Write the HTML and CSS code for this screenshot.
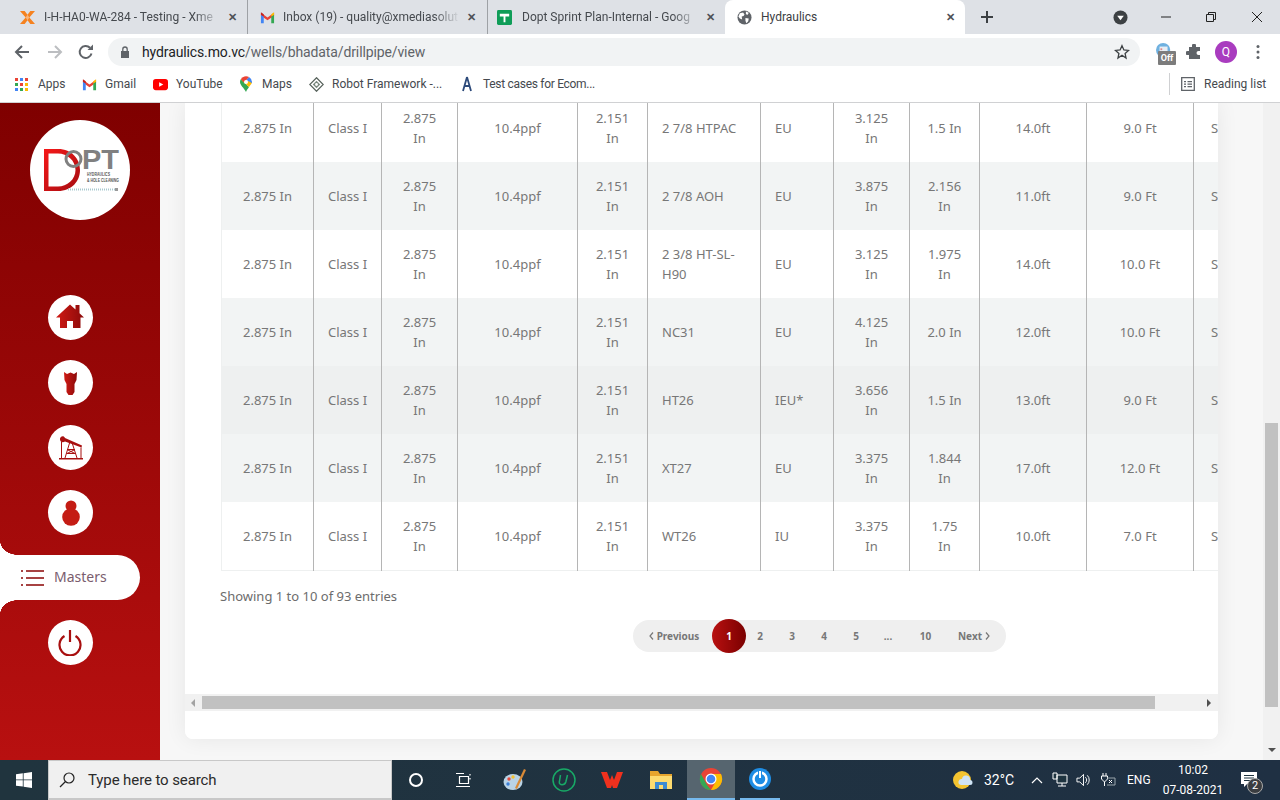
FILE: index.html
```html
<!DOCTYPE html>
<html lang="en">
<head>
<meta charset="utf-8">
<title>Hydraulics</title>
<link rel="stylesheet" href="styles.css">
</head>
<body>
<div class="tabstrip">
  <div class="tab t1">
    <svg class="fav" viewBox="0 0 16 16"><path fill="#f58220" d="M0 1l6 7-6 7h5l3-4 3 4h5l-6-7 6-7h-5L8 5 5 1z"/><path fill="#f9b47a" d="M6 8l2-3 2 3-2 3z"/></svg>
    <span class="tab-title">I-H-HA0-WA-284 - Testing - Xme</span><span class="tab-x">✕</span>
  </div>
  <div class="tab t2">
    <svg class="fav" viewBox="0 0 16 16"><path fill="#ea4335" d="M1 3l7 5 7-5v3L8 11 1 6z"/><path fill="#4285f4" d="M1 5v9h3V7z"/><path fill="#34a853" d="M15 5v9h-3V7z"/><path fill="#fbbc04" d="M12 4.5l3-2V5l-3 2z"/><path fill="#c5221f" d="M1 2.500l3 2V7L1 5z"/></svg>
    <span class="tab-title">Inbox (19) - quality@xmediasolut</span><span class="tab-x">✕</span>
  </div>
  <div class="tab t3">
    <svg class="fav" viewBox="0 0 16 16"><rect width="16" height="16" rx="1.500" fill="#0f9d58"/><path fill="#fff" d="M3 4h10v3H9v6H7V7H3z"/></svg>
    <span class="tab-title">Dopt Sprint Plan-Internal - Goog</span><span class="tab-x">✕</span>
  </div>
  <div class="tab tab-active">
    <svg class="fav" viewBox="0 0 16 16"><circle cx="8" cy="8" r="7.500" fill="#5f6368"/><path fill="#fff" d="M3 3.500l3.500-.8 1.500 2-1 1.800-2 .5.500 3L3 9 1.500 7zM9 8.500l3.500.5-.5 3-2 2-1-2.500zM9.500 1.500l3 1.500-1 2-2-.5z"/></svg>
    <span class="tab-title">Hydraulics</span><span class="tab-x">✕</span>
  </div>
  <span class="newtab">
    <svg class="ic14" viewBox="0 0 14 14"><path d="M7 1v12M1 7h12" stroke="#3c4043" stroke-width="2"/></svg>
  </span>
  <div class="win-controls">
    <svg class="profile-drop" viewBox="0 0 16 16"><circle cx="8" cy="8" r="7.500" fill="#3c4043"/><path fill="#fff" d="M4.500 6h7L8 11z"/></svg>
    <svg class="wc wc-min" viewBox="0 0 12 12"><path d="M1 6h10" stroke="#222" stroke-width="1"/></svg>
    <svg class="wc wc-max" viewBox="0 0 12 12"><path d="M1.500 3.500h7v7h-7zM3.500 3.500v-2h7v7h-2" fill="none" stroke="#222"/></svg>
    <svg class="wc wc-close" viewBox="0 0 12 12"><path d="M1 1l10 10M11 1L1 11" stroke="#222"/></svg>
  </div>
</div>

<div class="toolbar">
  <svg class="nav-ic nav-back" viewBox="0 0 16 16"><path d="M15 8H2M8 2L2 8l6 6" fill="none" stroke="#5f6368" stroke-width="2"/></svg>
  <svg class="nav-ic nav-fwd" viewBox="0 0 16 16"><path d="M1 8h13M8 2l6 6-6 6" fill="none" stroke="#bcbec1" stroke-width="2"/></svg>
  <svg class="nav-ic nav-reload" viewBox="0 0 16 16"><path d="M13.500 9.500A6 6 0 1 1 12 3.800" fill="none" stroke="#5f6368" stroke-width="2"/><path fill="#5f6368" d="M9.500 6H15V.5z"/></svg>
  <div class="omnibox">
    <svg class="lock" viewBox="0 0 10 12"><path fill="#5f6368" d="M1 5h8v7H1z"/><path d="M2.800 5V3.200a2.200 2.200 0 0 1 4.400 0V5" fill="none" stroke="#5f6368" stroke-width="1.300"/></svg>
    <span class="url"><b>hydraulics.mo.vc</b>/wells/bhadata/drillpipe/view</span>
    <svg class="star" viewBox="0 0 16 16"><path d="M8 1.700l1.900 4.200 4.600.5-3.400 3.100.9 4.500L8 11.200l-4 2.800.9-4.500L1.500 6.400l4.600-.5z" fill="none" stroke="#3c4043" stroke-width="1.300"/></svg>
  </div>
  <div class="ext">
    <svg class="ext-ic" viewBox="0 0 18 18"><circle cx="8" cy="8" r="8" fill="#6fb1e0"/><rect x="4" y="4" width="9" height="8" fill="#e8eef4"/><path d="M5 6h2v2H5z" fill="#d88"/></svg>
    <span class="off-badge">Off</span>
  </div>
  <svg class="puzzle" viewBox="0 0 16 16"><path fill="#5f6368" d="M6 1.500a2 2 0 0 1 4 0V3h4v4h-1.500a2 2 0 0 0 0 4H14v4H3v-4H1.500a2 2 0 0 1 0-4H3V3h3z"/></svg>
  <span class="avatar">Q</span>
  <svg class="kebab" viewBox="0 0 4 16"><circle cx="2" cy="2.500" r="1.500" fill="#5f6368"/><circle cx="2" cy="8" r="1.500" fill="#5f6368"/><circle cx="2" cy="13.500" r="1.500" fill="#5f6368"/></svg>
</div>

<div class="bookmarks">
  <span class="bm bm-apps">
    <svg class="bm-ic" viewBox="0 0 13 13"><g fill="#ea4335"><rect width="3" height="3"/><rect x="5" width="3" height="3" fill="#4285f4"/><rect x="10" width="3" height="3" fill="#ea4335"/><rect y="5" width="3" height="3" fill="#34a853"/><rect x="5" y="5" width="3" height="3" fill="#ea4335"/><rect x="10" y="5" width="3" height="3" fill="#fbbc04"/><rect y="10" width="3" height="3" fill="#4285f4"/><rect x="5" y="10" width="3" height="3" fill="#34a853"/><rect x="10" y="10" width="3" height="3" fill="#fbbc04"/></g></svg>
    Apps
  </span>
  <span class="bm bm-gmail">
    <svg class="bm-ic" viewBox="0 0 16 16"><path fill="#ea4335" d="M1 3l7 5 7-5v3L8 11 1 6z"/><path fill="#4285f4" d="M1 5v9h3V7z"/><path fill="#34a853" d="M15 5v9h-3V7z"/><path fill="#fbbc04" d="M12 4.500l3-2V5l-3 2z"/><path fill="#c5221f" d="M1 2.500l3 2V7L1 5z"/></svg>
    Gmail
  </span>
  <span class="bm bm-yt">
    <svg class="bm-ic" viewBox="0 0 16 16"><rect y="2" width="16" height="12" rx="3" fill="#f00"/><path fill="#fff" d="M6.500 5.500v5L11 8z"/></svg>
    YouTube
  </span>
  <span class="bm bm-maps">
    <svg class="bm-ic" viewBox="0 0 12 16"><path fill="#34a853" d="M6 16C4 12 0 9 0 6c0-1 .3-2 .8-2.800L9 11c-1 1.500-2.200 3-3 5z"/><path fill="#fbbc04" d="M.8 3.200L4 6.500 9 11c1.500-2 3-3.500 3-5l-4-1z"/><path fill="#4285f4" d="M12 6a6 6 0 0 0-3-5L6 4l2 1 4 2z"/><path fill="#ea4335" d="M.8 3.200A6 6 0 0 1 9 1L4 6.500z"/><circle cx="6" cy="6" r="2" fill="#fff"/></svg>
    Maps
  </span>
  <span class="bm bm-robot">
    <svg class="bm-ic" viewBox="0 0 16 16"><path d="M8 .8L15.200 8 8 15.200.8 8z" fill="#fff" stroke="#56615a" stroke-width="1.300"/><path d="M8 4l4 4-4 4-4-4z" fill="#7c8a80"/><circle cx="8" cy="8" r="1.500" fill="#fff"/></svg>
    Robot Framework -...
  </span>
  <span class="bm bm-test">
    <svg class="bm-ic" viewBox="0 0 12 16"><path d="M6 1L2 15M6 1l4 14M3.500 10h5" fill="none" stroke="#2d4a7a" stroke-width="1.800"/></svg>
    Test cases for Ecom...
  </span>
  <span class="bm-sep"></span>
  <span class="bm bm-read">
    <svg class="bm-ic" viewBox="0 0 14 14"><path d="M.7.7h12.600v12.600H.7z" fill="none" stroke="#5f6368" stroke-width="1.300"/><path d="M3 4h2v1.300H3zM6.500 4H11v1.300H6.500zM3 6.500h2v1.300H3zM6.500 6.500H11v1.300H6.500zM3 9h2v1.300H3zM6.500 9H11v1.300H6.500z" fill="#5f6368"/></svg>
    Reading list
  </span>
</div>

<div class="viewport">
  <aside class="sidebar">
    <div class="logo">
      <svg class="logo-svg" viewBox="0 0 100 100">
        <defs><linearGradient id="lg" x1="0" y1="0" x2="1" y2="1"><stop offset="0" stop-color="#f61818"/><stop offset="1" stop-color="#a50d12"/></linearGradient></defs>
        <path d="M14 29h14C42 29 50 39 50 50S42 71 28 71H14zM18.500 33.500v33H28c9 0 17.500-7 17.500-16.500S37 33.500 28 33.500z" fill="url(#lg)"/>
        <circle cx="43.500" cy="39" r="7.500" fill="none" stroke="#808080" stroke-width="3"/>
        <text x="52" y="49" class="logo-opt" textLength="37" lengthAdjust="spacingAndGlyphs">PT</text>
        <text x="57" y="55.500" class="logo-small" textLength="23" lengthAdjust="spacingAndGlyphs">HYDRAULICS</text>
        <text x="57" y="62" class="logo-small" textLength="32" lengthAdjust="spacingAndGlyphs">&amp; HOLE CLEANING</text>
        <path d="M38 69.500h47" stroke="#a9c9cf" stroke-width="2" stroke-dasharray="1 1"/>
        <path d="M85 68h3v3h-3z" fill="#999"/>
      </svg>
    </div>
    <nav class="side-nav">
      <a class="side-ic">
        <svg class="sv26" viewBox="0 0 28 24"><defs><linearGradient id="rg" x1="0" y1="0" x2="1" y2="0"><stop offset="0" stop-color="#d01a14"/><stop offset="1" stop-color="#8b0a0a"/></linearGradient></defs><path fill="url(#rg)" d="M14 .5l5.500 5V1h4v8.200L28 13.500h-3.500V24H17v-7h-6v7H4v-10.500H0z"/></svg>
      </a>
      <a class="side-ic">
        <svg class="sv-bit" viewBox="0 0 13 24"><path fill="url(#rg)" d="M0 1l3 2 3.500-1.500L10 3l3-2-.5 8L10.500 13v8L8.500 24h-4l-2-3v-8L.5 9z"/></svg>
      </a>
      <a class="side-ic">
        <svg class="sv-pump" viewBox="0 0 24 24"><path fill="#a80f0f" d="M0 22.500h24V24H0zM1 3c1-3 4-3 5-.5L23 10l-.5 2L6 6C3.500 8 .5 6 1 3z"/><path d="M2.500 6v16.500M22 12v10.500M11 6l-5 16.500M13 7l5 15.500M8.500 14h7M7.500 18h9M8 14l8 4M16 14l-8 4" stroke="#a80f0f" stroke-width="1" fill="none"/></svg>
      </a>
      <a class="side-ic">
        <svg class="sv-bulb" viewBox="0 0 18 26"><circle cx="9" cy="6" r="5.500" fill="#c41c14"/><circle cx="9" cy="17" r="8.800" fill="#c41c14"/></svg>
      </a>
      <a class="side-pill">
        <svg class="sv-list" viewBox="0 0 23 16"><path d="M5 1h18M5 8h18M5 15h18" stroke="#8b0505" stroke-width="1.600"/><path d="M0 1h2M0 8h2M0 15h2" stroke="#8b0505" stroke-width="1.600"/></svg>
        <span class="pill-label">Masters</span>
      </a>
      <a class="side-ic">
        <svg class="sv-power" viewBox="0 0 24 26"><path d="M12 0v12" stroke="#a80f0f" stroke-width="2.200"/><path d="M6.500 6a10.500 10.500 0 1 0 11 0" fill="none" stroke="#a80f0f" stroke-width="2.200"/></svg>
      </a>
    </nav>
  </aside>

  <main class="content">
    <section class="card">
      <div class="card-scroll">
        <table class="grid">
          <colgroup>
            <col class="c1"><col class="c2"><col class="c3"><col class="c4"><col class="c5"><col class="c6"><col class="c7"><col class="c8"><col class="c9"><col class="c10"><col class="c11"><col class="c12">
          </colgroup>
          <tbody>
            <tr><td>2.875 In</td><td>Class I</td><td>2.875 In</td><td>10.4ppf</td><td>2.151 In</td><td class="l">2 7/8 HTPAC</td><td class="l">EU</td><td>3.125 In</td><td>1.5 In</td><td>14.0ft</td><td>9.0 Ft</td><td class="l">S</td></tr>
            <tr class="alt"><td>2.875 In</td><td>Class I</td><td>2.875 In</td><td>10.4ppf</td><td>2.151 In</td><td class="l">2 7/8 AOH</td><td class="l">EU</td><td>3.875 In</td><td>2.156 In</td><td>11.0ft</td><td>9.0 Ft</td><td class="l">S</td></tr>
            <tr><td>2.875 In</td><td>Class I</td><td>2.875 In</td><td>10.4ppf</td><td>2.151 In</td><td class="l">2 3/8 HT-SL-H90</td><td class="l">EU</td><td>3.125 In</td><td>1.975 In</td><td>14.0ft</td><td>10.0 Ft</td><td class="l">S</td></tr>
            <tr class="alt"><td>2.875 In</td><td>Class I</td><td>2.875 In</td><td>10.4ppf</td><td>2.151 In</td><td class="l">NC31</td><td class="l">EU</td><td>4.125 In</td><td>2.0 In</td><td>12.0ft</td><td>10.0 Ft</td><td class="l">S</td></tr>
            <tr class="hover"><td>2.875 In</td><td>Class I</td><td>2.875 In</td><td>10.4ppf</td><td>2.151 In</td><td class="l">HT26</td><td class="l">IEU*</td><td>3.656 In</td><td>1.5 In</td><td>13.0ft</td><td>9.0 Ft</td><td class="l">S</td></tr>
            <tr class="alt"><td>2.875 In</td><td>Class I</td><td>2.875 In</td><td>10.4ppf</td><td>2.151 In</td><td class="l">XT27</td><td class="l">EU</td><td>3.375 In</td><td>1.844 In</td><td>17.0ft</td><td>12.0 Ft</td><td class="l">S</td></tr>
            <tr><td>2.875 In</td><td>Class I</td><td>2.875 In</td><td>10.4ppf</td><td>2.151 In</td><td class="l">WT26</td><td class="l">IU</td><td>3.375 In</td><td>1.75 In</td><td>10.0ft</td><td>7.0 Ft</td><td class="l">S</td></tr>
          </tbody>
        </table>
        <p class="info">Showing 1 to 10 of 93 entries</p>
        <div class="pager">
          <a class="pg pg-prev"><svg class="chev" viewBox="0 0 5 8"><path d="M4 .5L1 4l3 3.500" fill="none" stroke="#777" stroke-width="1.200"/></svg>Previous</a>
          <a class="pg pg-cur">1</a>
          <a class="pg pg-n">2</a>
          <a class="pg pg-n">3</a>
          <a class="pg pg-n">4</a>
          <a class="pg pg-n">5</a>
          <a class="pg pg-n">...</a>
          <a class="pg pg-ten">10</a>
          <a class="pg pg-next">Next<svg class="chev" viewBox="0 0 5 8"><path d="M1 .5L4 4 1 7.500" fill="none" stroke="#777" stroke-width="1.200"/></svg></a>
        </div>
      </div>
      <div class="hbar">
        <span class="arr arr-l"></span>
        <span class="hthumb"></span>
        <span class="arr arr-r"></span>
      </div>
      <div class="card-foot"></div>
    </section>
  </main>
  <div class="vbar">
    <span class="vthumb"></span>
    <span class="arr-dn"></span>
  </div>
</div>

<footer class="taskbar">
  <span class="tb-start"><svg class="ic16" viewBox="0 0 16 16"><path fill="#fff" d="M0 2.300L6.800 1.300v6.200H0zM7.600 1.200L16 0v7.500H7.600zM0 8.300h6.800v6.300L0 13.700zM7.600 8.300H16V16l-8.400-1.200z"/></svg></span>
  <div class="tb-search">
    <svg class="ic16" viewBox="0 0 16 16"><circle cx="10" cy="6" r="5" fill="none" stroke="#222" stroke-width="1.200"/><path d="M6.500 9.500L1 15" stroke="#222" stroke-width="1.200"/></svg>
    <span class="search-text">Type here to search</span>
  </div>
  <span class="tb-app tb-w48"><svg class="ic16" viewBox="0 0 16 16"><circle cx="8" cy="8" r="6" fill="none" stroke="#fff" stroke-width="2"/></svg></span>
  <span class="tb-app tb-w48"><svg class="ic16" viewBox="0 0 16 16"><path d="M3.500 4.500h9v7h-9zM0 1.500h8M0 14.500h14M14 2v1.500M14 6v1.500" fill="none" stroke="#fff" stroke-width="1.200"/></svg></span>
  <span class="tb-app tb-paint"><svg class="ic24" viewBox="0 0 24 24"><ellipse cx="10" cy="14" rx="9.500" ry="8" fill="#b9d3e6"/><circle cx="6" cy="11" r="1.700" fill="#e64a3c"/><circle cx="10" cy="9" r="1.700" fill="#f6c22f"/><circle cx="5" cy="16" r="1.700" fill="#3c7fd6"/><path d="M21 1l2 1-9 19-2-1z" fill="#d98a36"/></svg></span>
  <span class="tb-app tb-upwork"><svg class="ic24" viewBox="0 0 24 24"><circle cx="12" cy="12" r="11" fill="none" stroke="#18a966" stroke-width="1.500"/><path d="M8.500 7l-1.200 7c-.4 3.500 5.500 3.500 6.500 0L15.500 7" fill="none" stroke="#18a966" stroke-width="1.500"/></svg></span>
  <span class="tb-app tb-wps"><svg class="ic24" viewBox="0 0 24 24"><path fill="#f0311e" d="M1 4h6l3 8 2-5 2 5 3-8h6l-6 16h-4l-1-3-1 3H7z"/></svg></span>
  <span class="tb-app tb-folder"><svg class="ic24" viewBox="0 0 24 24"><path fill="#e7a52e" d="M1 3h8l2 3h12v15H1z"/><path fill="#fddb70" d="M1 8h22v13H1z"/><rect x="6" y="14" width="12" height="7" fill="#3d8bd3"/><rect x="10" y="17" width="4" height="4" fill="#fddb70"/></svg></span>
  <span class="tb-app tb-w48 tb-active"><svg class="ic24" viewBox="0 0 24 24"><circle cx="12" cy="12" r="11" fill="#ea4335"/><path fill="#34a853" d="M2 7l6 11 4 5A11 11 0 0 1 2 7z"/><path fill="#fbbc04" d="M12 7h10a11 11 0 0 1-10 16l5-9z"/><circle cx="12" cy="12" r="5.500" fill="#fff"/><circle cx="12" cy="12" r="4.300" fill="#4285f4"/></svg></span>
  <span class="tb-app tb-running"><svg class="ic24" viewBox="0 0 24 24"><circle cx="12" cy="12" r="11" fill="#1f8de4"/><circle cx="12" cy="12" r="6.500" fill="none" stroke="#fff" stroke-width="2.500"/><path d="M12 3v8" stroke="#1f8de4" stroke-width="4"/><path d="M12 4v7" stroke="#fff" stroke-width="2"/></svg></span>
  <div class="tray">
    <svg class="ic20" viewBox="0 0 20 20"><circle cx="9" cy="10" r="9" fill="#f4c430"/><path d="M8 15a3 3 0 0 1 1-6 4 4 0 0 1 8 1 2.500 2.500 0 0 1 0 5z" fill="#cfe3f5"/></svg>
    <span class="temp">32°C</span>
    <svg class="tr-caret" viewBox="0 0 12 8"><path d="M1 7l5-5 5 5" fill="none" stroke="#fff" stroke-width="1.200"/></svg>
    <svg class="tr-net" viewBox="0 0 16 16"><path d="M5 3h10v8H5zM10 11v3M6 14h8M1 1h4v6H1z" fill="#1f3440" stroke="#fff"/></svg>
    <svg class="tr-vol" viewBox="0 0 16 16"><path d="M1 6h3l4-4v12l-4-4H1z" fill="none" stroke="#fff"/><path d="M10 5a4 4 0 0 1 0 6M12 3a7 7 0 0 1 0 10" fill="none" stroke="#fff"/></svg>
    <svg class="tr-pow" viewBox="0 0 16 16"><path d="M3 1v3M6 1v3M1.500 4h6v3l-3 3-3-3zM4.500 10v4" fill="none" stroke="#fff"/><path d="M7 6h8v7H7" fill="none" stroke="#9aa5ab"/><path d="M9 8l3 3M12 8l-3 3" stroke="#fff"/></svg>
    <span class="eng">ENG</span>
    <span class="clock"><span>10:02</span><span>07-08-2021</span></span>
    <span class="notif">
      <svg class="ic20" viewBox="0 0 20 20"><path fill="#fff" d="M1 2h16v12H7l-3 3v-3H1z"/><path d="M4 5.500h10M4 8h10M4 10.500h7" stroke="#1f3440"/></svg>
      <span class="notif-badge">2</span>
    </span>
  </div>
</footer>
</body>
</html>
```
FILE: styles.css
```css
* { box-sizing: border-box; }
html, body { margin: 0; padding: 0; }
body {
  width: 1280px; height: 800px; overflow: hidden;
  display: flex; flex-direction: column;
  font-family: Roboto, "Noto Sans", sans-serif;
  background: #fff;
}
svg { display: block; flex: none; }

/* Tab strip */
.tabstrip { height: 34px; flex: none; background: #dee1e6; display: flex; align-items: stretch; padding-left: 8px; }
.tab { width: 239px; display: flex; align-items: center; padding: 0 8px 0 12px; font-size: 12px; color: #45494e; }
.t2, .t3 { border-left: 1px solid #9ea1a5; background-clip: padding-box; }
.t2 { width: 240px; padding-right: 9px; }
.t2 .fav { margin-right: 8px; }
.t3 { width: 238px; padding-left: 9px; }
.t3 .fav { margin-right: 10px; }
.tab-active { width: 240px; background: #fff; border-radius: 8px 8px 0 0; color: #3c4043; }
.fav { width: 15px; height: 15px; margin-right: 9px; }
.tab-title {
  flex: 1; min-width: 0; white-space: nowrap; overflow: hidden;
  -webkit-mask-image: linear-gradient(90deg, #000 85%, transparent);
  mask-image: linear-gradient(90deg, #000 85%, transparent);
}
.tab-active .tab-title { -webkit-mask-image: none; mask-image: none; }
.tab-x { width: 14px; font-size: 11px; font-weight: 700; color: #4d5156; text-align: center; margin-left: 4px; }
.newtab { width: 44px; display: flex; align-items: center; justify-content: center; }
.ic14 { width: 14px; height: 14px; }
.win-controls { flex: 1; display: flex; align-items: center; }
.profile-drop { width: 15px; height: 15px; margin-left: 104px; }
.wc { width: 12px; height: 12px; }
.wc-min { margin-left: 32px; }
.wc-max { margin-left: 33px; }
.wc-close { margin-left: 34px; }

/* Toolbar */
.toolbar { height: 35px; flex: none; background: #fff; display: flex; align-items: center; padding: 1px 0 0 14px; }
.nav-ic { width: 16px; height: 16px; }
.nav-fwd { margin-left: 17px; }
.nav-reload { margin-left: 15px; }
.omnibox { width: 1032px; height: 28px; margin-left: 14px; border-radius: 14px; background: #f1f3f4; display: flex; align-items: center; padding-left: 12px; }
.lock { width: 10px; height: 12px; }
.url { margin-left: 12px; font-size: 14px; letter-spacing: -.12px; color: #5f6368; flex: 1; }
.url b { font-weight: 400; color: #202124; }
.star { width: 16px; height: 16px; margin-right: 10px; }
.ext { position: relative; width: 20px; height: 20px; margin-left: 13px; }
.ext-ic { width: 16px; height: 16px; margin: 1px 0 0 3px; }
.off-badge { position: absolute; left: 5px; top: 9px; width: 18px; height: 14px; background: #7c7c7c; color: #fff; font-size: 9px; font-weight: 700; line-height: 14px; text-align: center; border-radius: 1px; }
.puzzle { width: 16px; height: 16px; margin-left: 13px; }
.avatar { width: 22px; height: 22px; border-radius: 50%; background: #a93cbf; color: #fff; font-size: 12px; line-height: 22px; text-align: center; margin-left: 13px; }
.kebab { width: 4px; height: 16px; margin-left: 19px; }

/* Bookmarks */
.bookmarks { height: 34px; flex: none; background: #fff; border-bottom: 1px solid #d0d1d3; display: flex; align-items: center; font-size: 12px; color: #45494e; padding: 0 0 3px 15px; }
.bm { display: flex; align-items: center; white-space: nowrap; }
.bm-ic { margin-right: 9px; width: 15px; height: 15px; }
.bm-apps .bm-ic { width: 13px; height: 13px; margin-right: 10px; }
.bm-apps { width: 67px; }
.bm-gmail { width: 71px; }
.bm-gmail .bm-ic, .bm-yt .bm-ic, .bm-robot .bm-ic { margin-right: 8px; }
.bm-yt { width: 87px; }
.bm-maps { width: 69px; }
.bm-maps .bm-ic { width: 12px; height: 16px; margin-right: 10px; }
.bm-robot { width: 152px; }
.bm-test .bm-ic { width: 12px; height: 16px; margin-right: 10px; }
.bm-test { width: 140px; letter-spacing: -.3px; }
.bm-sep { width: 1px; height: 22px; background: #cfd0d2; margin-left: 568px; }
.bm-read { margin-left: 11px; }
.bm-read .bm-ic { width: 14px; height: 14px; }

/* Page */
.viewport { flex: 1; min-height: 0; display: flex; overflow: hidden; background: #f7f7f7; }

.sidebar { width: 160px; flex: none; background: linear-gradient(180deg, #7f0000 0%, #b81010 100%); padding-top: 17px; }
.logo { width: 100px; height: 100px; border-radius: 50%; background: #fff; margin-left: 30px; }
.logo-svg { width: 100px; height: 100px; }
.logo-opt { font-family: "Liberation Sans", sans-serif; font-size: 27px; font-weight: 700; fill: #808080; }
.logo-small { font-family: "Liberation Sans", sans-serif; font-size: 4.500px; font-weight: 700; fill: #555; }

.side-nav { margin-top: 75px; display: flex; flex-direction: column; gap: 20px; }
.side-ic { width: 45px; height: 45px; margin-left: 48px; border-radius: 50%; background: #fff; display: flex; align-items: center; justify-content: center; }
.sv26 { width: 28px; height: 24px; margin: 0 1px 3px 0; }
.sv-bit { width: 13px; height: 24px; }
.sv-pump { width: 24px; height: 25px; }
.sv-bulb { width: 18px; height: 26px; }
.sv-power { width: 24px; height: 26px; margin-right: 1px; }
.side-pill {
  position: relative; width: 140px; height: 45px; background: #fff;
  border-radius: 0 22.500px 22.500px 0; display: flex; align-items: center;
  padding-left: 21px; font-family: "Noto Sans", sans-serif; font-size: 14px; color: #7a5d6e;
}
.side-pill::before, .side-pill::after { content: ""; position: absolute; left: 0; width: 18px; height: 14px; }
.side-pill::before { top: -14px; background: radial-gradient(ellipse 18px 14px at 100% 0, transparent 98%, #fff 100%); }
.side-pill::after { bottom: -14px; background: radial-gradient(ellipse 18px 14px at 100% 100%, transparent 98%, #fff 100%); }
.sv-list { width: 23px; height: 16px; margin-right: 10px; }
.pill-label { margin-bottom: 2px; }

.content { width: 1103px; flex: none; padding: 0 45px 21px 25px; }
.card { height: 100%; background: #fff; border-radius: 0 0 8px 8px; box-shadow: 0 0 22px rgba(0,0,0,.07); display: flex; flex-direction: column; overflow: hidden; }
.card-scroll { height: 591px; flex: none; overflow: hidden; padding-left: 36px; font-family: "Noto Sans", sans-serif; }

.grid { width: 973px; table-layout: fixed; border-collapse: collapse; margin-top: -9px; border-left: 1px solid #eef0f0; border-bottom: 1px solid #eef0f0; font-size: 13px; line-height: 20px; color: #777; }
.c1 { width: 92px; } .c2 { width: 68px; } .c3 { width: 76px; } .c4 { width: 120px; }
.c5 { width: 70px; } .c6 { width: 113px; } .c7 { width: 73px; } .c8 { width: 76px; }
.c9 { width: 70px; } .c10 { width: 107px; } .c11 { width: 107px; } .c12 { width: 80px; }
.grid td { height: 68px; padding: 0 15px; text-align: center; border-right: 1px solid #b5b5b5; vertical-align: middle; }
.grid td:nth-child(2) { padding: 0 8px; }
.grid td.l { text-align: left; padding-left: 14px; }
.grid td:last-child { border-right: 0; padding-left: 17px; }
.grid .alt td { background: #f2f4f4; }
.grid .hover td { background: #eef0f0; }

.info { margin: 15px 0 0 -1px; font-size: 13px; line-height: 20px; color: #6c6c6c; }
.pager {
  width: 373px; height: 32px; margin: 14px 0 0 412px; background: #efefef; border-radius: 16px;
  display: flex; align-items: center; padding-left: 15px;
  font-size: 10px; font-weight: 700; color: #777;
}
.pg { display: flex; align-items: center; justify-content: center; white-space: nowrap; }
.pg-prev { width: 52px; margin-right: 12px; gap: 3px; }
.pg-cur { width: 34px; height: 34px; border-radius: 50%; background: linear-gradient(90deg, #b81010, #7a0000); color: #fff; margin-right: -2px; }
.pg-n { width: 32px; }
.pg-ten { width: 43px; margin-right: 11px; }
.pg-next { width: 32px; gap: 3px; }
.chev { width: 5px; height: 8px; }

.hbar { height: 17px; flex: none; background: #f1f1f1; display: flex; align-items: center; }
.arr { width: 0; height: 0; border-style: solid; border-width: 4px; border-color: transparent; }
.arr-l { border-right-color: #a3a3a3; border-left-width: 0; margin-left: 6px; }
.hthumb { width: 953px; height: 13px; background: #c1c1c1; margin-left: 7px; }
.arr-r { border-left-color: #505050; border-right-width: 0; margin-left: 52px; }
.card-foot { flex: 1; background: #fff; }

.vbar { width: 17px; flex: none; background: #f1f1f1; display: flex; flex-direction: column; align-items: center; }
.vthumb { width: 13px; height: 284px; background: #c1c1c1; margin-top: 320px; }
.arr-dn { width: 0; height: 0; border-style: solid; border-width: 4px 4px 0; border-color: #505050 transparent transparent; margin-top: 41px; }

/* Taskbar */
.taskbar { height: 40px; flex: none; background: linear-gradient(90deg, #20343e, #1f3043); display: flex; align-items: stretch; color: #fff; }
.tb-start { width: 48px; display: flex; align-items: center; justify-content: center; }
.ic16 { width: 16px; height: 16px; }
.ic20 { width: 20px; height: 20px; }
.ic24 { width: 24px; height: 24px; }
.tb-search { width: 344px; background: #f0f0f0; border: 1px solid #c8c8c8; border-bottom-width: 2px; display: flex; align-items: center; padding-left: 10px; color: #2b2b2b; font-size: 15px; }
.search-text { margin: 1px 0 0 13px; letter-spacing: -.1px; }
.tb-app { display: flex; align-items: center; justify-content: center; }
.tb-w48 { width: 48px; }
.tb-paint { width: 54px; }
.tb-upwork { width: 44px; }
.tb-wps { width: 52px; }
.tb-folder { width: 49px; padding-right: 4px; }
.tb-active { background: #56656f; border-bottom: 2px solid #76b9ed; }
.tb-running { width: 40px; margin-left: 5px; border-bottom: 2px solid #76b9ed; }
.tray { flex: 1; display: flex; align-items: center; padding-left: 173px; font-size: 14px; }
.temp { margin-left: 11px; width: 30px; white-space: nowrap; }
.tr-caret { width: 12px; height: 8px; margin-left: 17px; }
.tr-net { width: 16px; height: 16px; margin-left: 9px; }
.tr-vol { width: 15px; height: 16px; margin-left: 8px; }
.tr-pow { width: 16px; height: 16px; margin-left: 9px; }
.eng { font-size: 12px; margin-left: 11px; width: 24px; }
.clock { width: 58px; margin-left: 13px; font-size: 12px; line-height: 20px; display: flex; flex-direction: column; align-items: center; white-space: nowrap; }
.notif { position: relative; margin-left: 18px; }
.notif-badge { position: absolute; left: 7px; top: 8px; width: 16px; height: 16px; border-radius: 50%; background: #3a3d40; border: 1px solid #aaa; font-size: 11px; line-height: 14px; text-align: center; color: #fff; }
```
